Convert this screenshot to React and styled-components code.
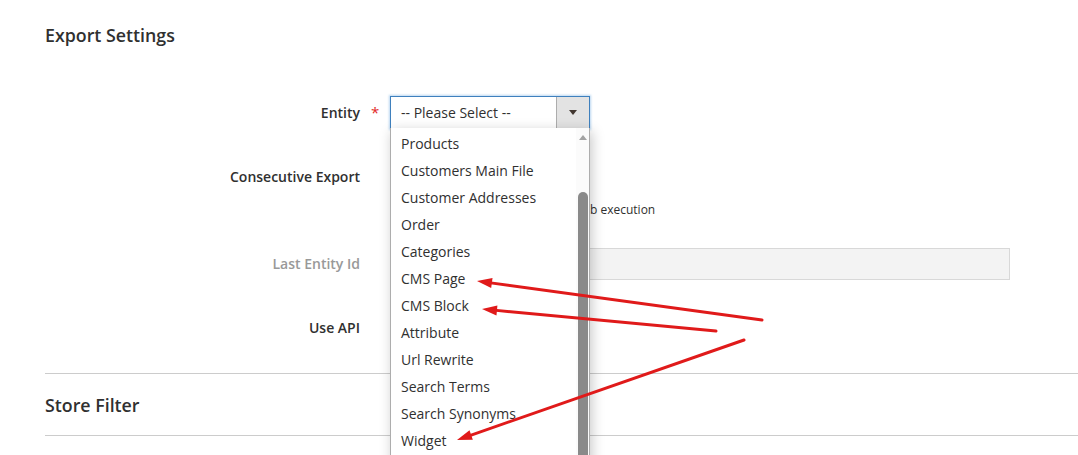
import React from "react";
import styled, { createGlobalStyle } from "styled-components";

const GlobalStyle = createGlobalStyle`
  html, body { margin: 0; padding: 0; background: #fff; }
  body { font-family: "Open Sans", "Noto Sans", sans-serif; color: #303030; overflow: hidden; }
  * { box-sizing: border-box; }
`;

const Page = styled.div`
  position: relative;
  width: 1078px;
  height: 455px;
  overflow: hidden;
  padding-left: 45px;
`;

const SectionTitle = styled.h2`
  margin: ${(p) => p.$top}px 0 0;
  font-size: 17.8px;
  line-height: 24px;
  font-weight: 600;
  color: #303030;
`;

const Fieldset = styled.div`
  margin-top: 49px;
  display: flex;
  flex-direction: column;
`;

const Field = styled.div`
  display: grid;
  grid-template-columns: 315px 30px 620px;
  align-items: start;
  margin-top: ${(p) => p.$top || 0}px;
`;

const Label = styled.label`
  text-align: right;
  font-size: 14px;
  font-weight: 600;
  line-height: ${(p) => p.$h || 33}px;
  color: ${(p) => (p.$disabled ? "#999" : "#303030")};
`;

const Req = styled.span`
  padding-left: 11px;
  font-size: 15px;
  line-height: 33px;
  color: #e22626;
`;

const Control = styled.div`
  display: flex;
  flex-direction: column;
`;

const SelectWrap = styled.div`
  position: relative;
  width: 200px;
  height: 33px;
  display: flex;
  border: 1px solid #3f80bd;
  box-shadow: 0 0 2px 1px rgba(104, 168, 224, 0.45);
  background: #fff;
  z-index: 5;
`;

const SelectValue = styled.div`
  flex: 1;
  padding-left: 10px;
  font-size: 14px;
  line-height: 31px;
  color: #303030;
`;

const SelectButton = styled.div`
  width: 33px;
  background: #e3e3e3;
  border-left: 1px solid #adadad;
  display: flex;
  align-items: center;
  justify-content: center;
`;

const Caret = styled.span`
  width: 0;
  height: 0;
  border-left: 4px solid transparent;
  border-right: 4px solid transparent;
  border-top: 5px solid #41362f;
`;

const Dropdown = styled.div`
  position: absolute;
  top: 100%;
  left: -1px;
  width: 200px;
  height: 360px;
  display: flex;
  background: #fff;
  border: 1px solid #adadad;
  border-top: none;
  box-shadow: 2px 3px 12px rgba(0, 0, 0, 0.22);
`;

const Options = styled.ul`
  flex: 1;
  margin: 0;
  padding: 2px 0 0;
  list-style: none;
`;

const Option = styled.li`
  height: 27px;
  padding-left: 10px;
  font-size: 14px;
  line-height: 27px;
  color: #303030;
  white-space: nowrap;
`;

const ScrollTrack = styled.div`
  width: 13px;
  display: flex;
  flex-direction: column;
  align-items: center;
  background: #fbfbfb;
`;

const ScrollArrow = styled.span`
  margin-top: 7px;
  width: 0;
  height: 0;
  border-left: 4px solid transparent;
  border-right: 4px solid transparent;
  border-bottom: 5px solid #a3a3a3;
`;

const ScrollThumb = styled.div`
  margin-top: ${(p) => p.$top}px;
  width: 10px;
  flex: 1;
  background: #8a8a8a;
  border-radius: 5px 5px 0 0;
`;

const Toggle = styled.div`
  width: 46px;
  height: 22px;
  margin-top: 5px;
  border-radius: 12px;
  background: #e3e3e3;
`;

const ToggleSlot = styled.div`
  height: 33px;
`;

const Note = styled.div`
  margin-top: 8px;
  display: flex;
  font-size: 12px;
  line-height: 17px;
  color: #303030;
  white-space: nowrap;
`;

const Clip = styled.span`
  width: 200px;
  overflow: hidden;
  text-align: right;
`;

const TextInput = styled.input`
  width: 620px;
  height: 32px;
  border: 1px solid #d8d8d8;
  background: #f3f3f3;
  font-family: inherit;
  font-size: 14px;
  padding: 0 10px;
`;

const Divider = styled.hr`
  margin: ${(p) => p.$top}px 0 0;
  border: none;
  border-top: 1px solid #cccccc;
  height: 0;
`;

const Overlay = styled.svg`
  position: absolute;
  left: 0;
  top: 0;
  width: 1078px;
  height: 455px;
  pointer-events: none;
  z-index: 10;
`;

const options = [
  "Products",
  "Customers Main File",
  "Customer Addresses",
  "Order",
  "Categories",
  "CMS Page",
  "CMS Block",
  "Attribute",
  "Url Rewrite",
  "Search Terms",
  "Search Synonyms",
  "Widget",
];

const arrows = [
  { x1: 762, y1: 320, x2: 477, y2: 281 },
  { x1: 716, y1: 331, x2: 482, y2: 309 },
  { x1: 744, y1: 340, x2: 457, y2: 440 },
];

function Arrow({ x1, y1, x2, y2 }) {
  const dx = x2 - x1;
  const dy = y2 - y1;
  const len = Math.hypot(dx, dy);
  const ux = dx / len;
  const uy = dy / len;
  const head = 15;
  const half = 5;
  const bx = x2 - ux * head;
  const by = y2 - uy * head;
  const lx = x2 - ux * (head - 3);
  const ly = y2 - uy * (head - 3);
  const pts = `${x2},${y2} ${bx - uy * half},${by + ux * half} ${bx + uy * half},${by - ux * half}`;
  return (
    <g>
      <line x1={x1} y1={y1} x2={lx} y2={ly} stroke="#e01a1a" strokeWidth="3" strokeLinecap="round" />
      <polygon points={pts} fill="#e01a1a" />
    </g>
  );
}

export default function App() {
  return (
    <Page>
      <GlobalStyle />
      <SectionTitle $top={23}>Export Settings</SectionTitle>
      <Fieldset>
        <Field>
          <Label>Entity</Label>
          <Req>*</Req>
          <Control>
            <SelectWrap>
              <SelectValue>-- Please Select --</SelectValue>
              <SelectButton>
                <Caret />
              </SelectButton>
              <Dropdown>
                <Options>
                  {options.map((o) => (
                    <Option key={o}>{o}</Option>
                  ))}
                </Options>
                <ScrollTrack>
                  <ScrollArrow />
                  <ScrollThumb $top={52} />
                </ScrollTrack>
              </Dropdown>
            </SelectWrap>
          </Control>
        </Field>
        <Field $top={31}>
          <Label>Consecutive Export</Label>
          <span />
          <Control>
            <ToggleSlot>
              <Toggle />
            </ToggleSlot>
            <Note>
              <Clip>after each jo</Clip>
              <span>b execution</span>
            </Note>
          </Control>
        </Field>
        <Field $top={30}>
          <Label $disabled $h={32}>Last Entity Id</Label>
          <span />
          <Control>
            <TextInput disabled defaultValue="" />
          </Control>
        </Field>
        <Field $top={31}>
          <Label>Use API</Label>
          <span />
          <Control>
            <ToggleSlot>
              <Toggle />
            </ToggleSlot>
          </Control>
        </Field>
      </Fieldset>
      <Divider $top={29} />
      <SectionTitle $top={19}>Store Filter</SectionTitle>
      <Divider $top={18} />
      <Overlay viewBox="0 0 1078 455">
        {arrows.map((a, i) => (
          <Arrow key={i} {...a} />
        ))}
      </Overlay>
    </Page>
  );
}
